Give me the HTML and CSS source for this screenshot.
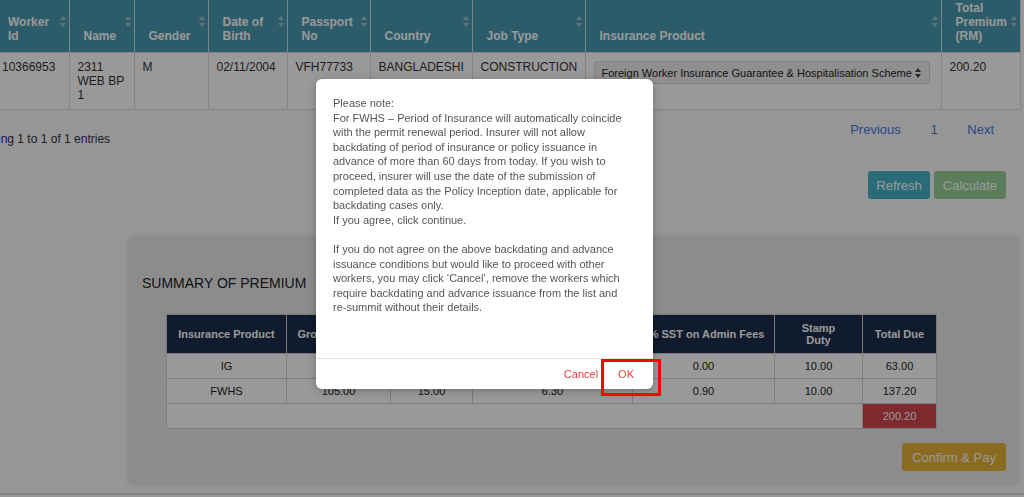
FILE: index.html
```html
<!DOCTYPE html>
<html lang="en">
<head>
  <meta charset="UTF-8">
  <meta name="viewport" content="width=device-width, initial-scale=1.0">
  <title>Worker Insurance</title>
  <link rel="stylesheet" href="styles.css">
</head>
<body>
  <div class="page">
    <table class="workers">
      <colgroup>
        <col style="width:75px"><col style="width:65px"><col style="width:74px"><col style="width:79px">
        <col style="width:83px"><col style="width:102px"><col style="width:113px"><col style="width:356px"><col style="width:79px">
      </colgroup>
      <thead>
        <tr>
          <th>Worker Id<span class="sort"></span></th>
          <th>Name<span class="sort"></span></th>
          <th>Gender<span class="sort"></span></th>
          <th>Date of Birth<span class="sort"></span></th>
          <th>Passport No<span class="sort"></span></th>
          <th>Country<span class="sort"></span></th>
          <th>Job Type<span class="sort"></span></th>
          <th>Insurance Product<span class="sort"></span></th>
          <th>Total Premium (RM)<span class="sort"></span></th>
        </tr>
      </thead>
      <tbody>
        <tr>
          <td>10366953</td>
          <td>2311 WEB BP 1</td>
          <td>M</td>
          <td>02/11/2004</td>
          <td>VFH77733</td>
          <td>BANGLADESHI</td>
          <td>CONSTRUCTION</td>
          <td>
            <div class="select">
              <span>Foreign Worker Insurance Guarantee &amp; Hospitalisation Scheme</span>
              <svg width="6" height="10" viewBox="0 0 6 10"><path d="M3 0L6 4H0z M3 10L0 6h6z" fill="#444"/></svg>
            </div>
          </td>
          <td>200.20</td>
        </tr>
      </tbody>
    </table>

    <div class="dt-footer">
      <div class="dt-info">Showing 1 to 1 of 1 entries</div>
      <div class="dt-paging">
        <a href="#">Previous</a>
        <a href="#">1</a>
        <a href="#">Next</a>
      </div>
    </div>

    <div class="actions">
      <button class="btn btn-refresh">Refresh</button>
      <button class="btn btn-calc" disabled>Calculate</button>
    </div>

    <section class="summary">
      <h3>SUMMARY OF PREMIUM</h3>
      <table class="premium">
        <colgroup>
          <col style="width:120px"><col style="width:104px"><col style="width:82px"><col style="width:160px">
          <col style="width:142px"><col style="width:88px"><col style="width:74px">
        </colgroup>
        <thead>
          <tr>
            <th>Insurance Product</th>
            <th>Gross Premium</th>
            <th>Admin Fees</th>
            <th>6% SST on Gross Premium</th>
            <th>6% SST on Admin Fees</th>
            <th>Stamp<br>Duty</th>
            <th>Total Due</th>
          </tr>
        </thead>
        <tbody>
          <tr><td>IG</td><td>50.00</td><td>0.00</td><td>3.00</td><td>0.00</td><td>10.00</td><td>63.00</td></tr>
          <tr><td>FWHS</td><td>105.00</td><td>15.00</td><td>6.30</td><td>0.90</td><td>10.00</td><td>137.20</td></tr>
          <tr><td colspan="6"></td><td class="grand">200.20</td></tr>
        </tbody>
      </table>
      <div class="pay-row">
        <button class="btn btn-pay">Confirm &amp; Pay</button>
      </div>
    </section>

    <footer class="site-footer"></footer>
  </div>

  <div class="overlay"></div>

  <div class="dialog">
    <div class="dialog-body">
      Please note:<br>
      For FWHS – Period of Insurance will automatically coincide with the permit renewal period. Insurer will not allow backdating of period of insurance or policy issuance in advance of more than 60 days from today. If you wish to proceed, insurer will use the date of the submission of completed data as the Policy Inception date, applicable for backdating cases only.<br>
      If you agree, click continue.<br>
      <br>
      If you do not agree on the above backdating and advance issuance conditions but would like to proceed with other workers, you may click ‘Cancel’, remove the workers which require backdating and advance issuance from the list and re-summit without their details.
    </div>
    <div class="dialog-footer">
      <button class="link-btn">Cancel</button>
      <button class="link-btn">OK</button>
    </div>
  </div>

  <div class="highlight"></div>
</body>
</html>
```

FILE: styles.css
```css
body {
  margin: 0;
  font-family: "Liberation Sans", Arial, sans-serif;
  background-color: #fbfbfb;
  color: #333;
}

.page {
  overflow: hidden;
  height: 497px;
}

.workers {
  margin-left: -6px;
  width: 1026px;
  table-layout: fixed;
  border-collapse: collapse;
  font-size: 12px;
  line-height: 14px;
}

.workers th {
  position: relative;
  background-color: #4a9aaf;
  color: #fff;
  font-weight: bold;
  text-align: left;
  vertical-align: bottom;
  padding: 1px 16px 9px 14px;
  height: 42px;
  border-left: 1px solid #c9dfe5;
  border-bottom: 1px solid #dcdcdc;
}

.workers th:first-child {
  border-left: none;
}

.workers th:last-child,
.workers td:last-child {
  border-right: 1px solid #dcdcdc;
}

.sort {
  position: absolute;
  right: 6px;
  top: 16px;
  width: 0;
  height: 11px;
}

.sort::before,
.sort::after {
  content: "";
  position: absolute;
  left: -3px;
  border-left: 3.5px solid transparent;
  border-right: 3.5px solid transparent;
}

.sort::before {
  top: 0;
  border-bottom: 4.5px solid rgba(255,255,255,0.45);
}

.sort::after {
  bottom: 0;
  border-top: 4.5px solid rgba(255,255,255,0.45);
}

.workers td {
  background-color: #fff;
  vertical-align: top;
  padding: 7px 8px 7px 8px;
  height: 42px;
  border-left: 1px solid #dcdcdc;
  border-bottom: 1px solid #dcdcdc;
}

.workers td:first-child {
  border-left: none;
}

.select {
  display: flex;
  justify-content: space-between;
  align-items: center;
  height: 21px;
  margin-top: 1px;
  margin-right: 3px;
  padding: 0 8px 0 7px;
  border: 1px solid #d6d6d6;
  border-radius: 4px;
  background-color: #efefef;
  font-size: 11px;
  color: #222;
}

.dt-footer {
  display: flex;
  justify-content: space-between;
  align-items: flex-start;
  height: 38px;
  font-size: 12px;
  line-height: 15px;
}

.dt-info {
  margin-left: -32px;
  padding-top: 22px;
}

.dt-paging {
  padding-top: 12px;
  margin-right: 17px;
  font-size: 13px;
}

.dt-paging a {
  color: #4578e0;
  text-decoration: none;
  padding: 0 13px;
}

.actions {
  display: flex;
  justify-content: flex-end;
  gap: 4px;
  margin-top: 23px;
  margin-right: 18px;
}

.btn {
  height: 28px;
  padding: 0 8px;
  border: none;
  border-radius: 3px;
  font-family: inherit;
  font-size: 13px;
  color: #fff;
}

.btn-refresh {
  background-color: #46b3c8;
}

.btn-calc {
  background-color: #9ad09a;
  padding: 0 9px;
}

.summary {
  margin: 38px 6px 9px 129px;
  padding: 13px 12px 13px 13px;
  background-color: #e9e9e9;
  box-shadow: 0 0 6px rgba(0,0,0,0.15);
}

.summary h3 {
  margin: 25px 0 23px 0;
  font-size: 14px;
  line-height: 16px;
  font-weight: normal;
  color: #222;
}

.premium {
  margin-left: 24px;
  width: 770px;
  table-layout: fixed;
  border-collapse: collapse;
  font-size: 11px;
  text-align: center;
}

.premium th {
  background-color: #1c2d4b;
  color: #fff;
  font-weight: bold;
  height: 36px;
  padding: 1px 6px;
  line-height: 12px;
  border: 1px solid #c8c8c8;
}

.premium td {
  background-color: #fff;
  height: 24px;
  padding: 0 6px;
  border: 1px solid #d2d2d2;
  color: #222;
}

.premium td.grand {
  background-color: #d2464e;
  color: #fff;
}

.pay-row {
  display: flex;
  justify-content: flex-end;
  margin-top: 14px;
}

.btn-pay {
  background-color: #e8b23a;
  padding: 0 10px;
}

.site-footer {
  border-top: 2px solid #dcdcdc;
  height: 20px;
}

.overlay {
  position: fixed;
  left: 0;
  top: 0;
  width: 100%;
  height: 100%;
  background-color: rgba(0,0,0,0.4);
  z-index: 10;
}

.dialog {
  position: absolute;
  left: 316px;
  top: 79px;
  width: 337px;
  height: 310px;
  background-color: #fff;
  border-radius: 6px;
  box-shadow: 0 2px 8px rgba(0,0,0,0.25);
  z-index: 11;
  display: flex;
  flex-direction: column;
}

.dialog-body {
  flex: 1;
  padding: 17px 27px 0 17px;
  font-size: 11px;
  line-height: 14.6px;
  color: #555;
}

.dialog-footer {
  display: flex;
  justify-content: flex-end;
  height: 30px;
  padding-right: 9px;
  border-top: 1px solid #e3e3e3;
}

.link-btn {
  background: none;
  border: none;
  padding: 0 10px;
  font-family: inherit;
  font-size: 11px;
  color: #e2443c;
}

.highlight {
  position: absolute;
  left: 601px;
  top: 359px;
  width: 60px;
  height: 37px;
  box-sizing: border-box;
  border: 3px solid #ff0000;
  z-index: 12;
}
```
